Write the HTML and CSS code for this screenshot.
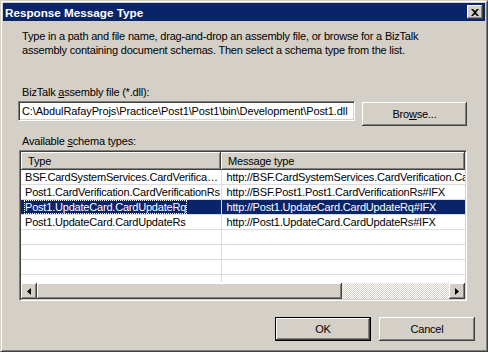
FILE: index.html
```html
<!DOCTYPE html>
<html lang="en">
<head>
    <meta charset="UTF-8">
    <title>Response Message Type</title>
    <link rel="stylesheet" href="styles.css">
</head>
<body>
<div class="window">
    <div class="titlebar">
        <span class="title">Response Message Type</span>
        <span class="close">
            <svg width="8" height="7" viewBox="0 0 8 7"><path d="M0 0h2l2 2 2-2h2L5 3.5 8 7H6L4 5 2 7H0l3-3.5z" fill="#000"/></svg>
        </span>
    </div>
    <div class="content">
        <p class="intro">Type in a path and file name, drag-and-drop an assembly file, or browse for a BizTalk assembly containing document schemas. Then select a schema type from the list.</p>

        <label class="caption first">BizTalk <u>a</u>ssembly file (*.dll):</label>
        <div class="file-row">
            <div class="field"><span>C:\AbdulRafayProjs\Practice\Post1\Post1\bin\Development\Post1.dll</span></div>
            <button class="btn browse">Bro<u>w</u>se...</button>
        </div>

        <label class="caption">Available <u>s</u>chema types:</label>
        <div class="list">
            <div class="list-body">
                <table>
                    <colgroup><col class="col-type"><col></colgroup>
                    <thead>
                        <tr><th>Type</th><th>Message type</th></tr>
                    </thead>
                    <tbody>
                        <tr><td>BSF.CardSystemServices.CardVerification.CardVerificationRs</td><td>http://BSF.CardSystemServices.CardVerification.CardVerificationRs#IFX</td></tr>
                        <tr><td>Post1.CardVerification.CardVerificationRs</td><td>http://BSF.Post1.Post1.CardVerificationRs#IFX</td></tr>
                        <tr class="selected"><td><span class="focus">Post1.UpdateCard.CardUpdateRq</span></td><td>http://Post1.UpdateCard.CardUpdateRq#IFX</td></tr>
                        <tr><td>Post1.UpdateCard.CardUpdateRs</td><td>http://Post1.UpdateCard.CardUpdateRs#IFX</td></tr>
                        <tr><td></td><td></td></tr>
                        <tr><td></td><td></td></tr>
                        <tr><td></td><td></td></tr>
                        <tr><td></td><td></td></tr>
                    </tbody>
                </table>
            </div>
            <div class="hscroll">
                <span class="arrow"><svg width="4" height="7" viewBox="0 0 4 7"><path d="M4 0v7L0 3.5z" fill="#000"/></svg></span>
                <span class="thumb"></span>
                <span class="track"></span>
                <span class="arrow"><svg width="4" height="7" viewBox="0 0 4 7"><path d="M0 0v7l4-3.5z" fill="#000"/></svg></span>
            </div>
        </div>

        <div class="actions">
            <button class="btn default">OK</button>
            <button class="btn">Cancel</button>
        </div>
    </div>
</div>
</body>
</html>
```

FILE: styles.css
```css
body {
    margin: 0;
    padding: 0;
    font-family: "Liberation Sans", Arial, sans-serif;
    font-size: 11px;
    letter-spacing: -0.2px;
    color: #000;
    background: #D4D0C8;
}

.window {
    width: 488px;
    height: 352px;
    box-sizing: border-box;
    padding: 2px;
    background: #D4D0C8;
    border: 1px solid;
    border-color: #D4D0C8 #404040 #404040 #D4D0C8;
    box-shadow: inset 1px 1px #fff, inset -1px -1px #808080;
}

.titlebar {
    height: 18px;
    background: #0A246A;
    color: #fff;
    display: flex;
    align-items: center;
    justify-content: space-between;
    padding: 0 2px 0 2px;
}

.title {
    font-weight: bold;
    font-size: 11.7px;
    letter-spacing: 0;
}

.close {
    width: 16px;
    height: 14px;
    box-sizing: border-box;
    background: #D4D0C8;
    display: flex;
    align-items: center;
    justify-content: center;
    box-shadow: inset -1px -1px #404040, inset 1px 1px #fff, inset -2px -2px #808080;
}

.content {
    padding: 8px 10px 0 15px;
}

.intro {
    margin: 0 0 0 4px;
    line-height: 14px;
    width: 430px;
}

.caption {
    display: block;
    margin: 8px 0 2px 4px;
    line-height: 14px;
}

.caption.first {
    margin-top: 28px;
}

.file-row {
    display: flex;
    align-items: flex-start;
    gap: 7px;
}

.field {
    width: 337px;
    height: 20px;
    box-sizing: border-box;
    background: #fff;
    border: 1px solid;
    border-color: #808080 #fff #fff #808080;
    box-shadow: inset 1px 1px #404040, inset -1px -1px #D4D0C8;
    display: flex;
    align-items: center;
    overflow: hidden;
    padding: 0 3px 0 3px;
    white-space: nowrap;
    letter-spacing: -0.1px;
}

.field span {
    flex-shrink: 0;
}

.btn {
    font-family: "Liberation Sans", Arial, sans-serif;
    font-size: 11px;
    letter-spacing: -0.2px;
    color: #000;
    background: #D4D0C8;
    border: none;
    padding: 0;
    box-shadow: inset -1px -1px #404040, inset 1px 1px #fff, inset -2px -2px #808080, inset 2px 2px #D4D0C8;
    width: 96px;
    height: 24px;
}

.btn.browse {
    width: 105px;
    margin-top: 1px;
}

.btn.default {
    border: 1px solid #000;
}

.list {
    margin-left: 1px;
    width: 448px;
    height: 151px;
    box-sizing: border-box;
    background: #fff;
    border: 1px solid;
    border-color: #808080 #fff #fff #808080;
    box-shadow: inset 1px 1px #404040, inset -1px -1px #D4D0C8;
    padding: 1px;
    display: flex;
    flex-direction: column;
}

.list-body {
    flex: 1;
    overflow: hidden;
}

table {
    width: 100%;
    table-layout: fixed;
    border-collapse: collapse;
}

.col-type {
    width: 200px;
}

th {
    height: 18px;
    padding: 0 7px;
    box-sizing: border-box;
    font-weight: normal;
    text-align: left;
    background: #D4D0C8;
    box-shadow: inset -1px -1px #404040, inset 1px 1px #fff, inset -2px -2px #808080;
    white-space: nowrap;
    overflow: hidden;
}

td {
    height: 14px;
    padding: 0 0 0 5px;
    line-height: 13px;
    border-bottom: 1px solid #DCDCDC;
    white-space: nowrap;
    overflow: hidden;
    text-overflow: clip;
}

td:first-child {
    border-right: 1px solid #DCDCDC;
    padding-left: 4px;
    text-overflow: ellipsis;
}

tr.selected td {
    background: #0A246A;
    color: #fff;
}

.focus {
    outline: 1px dotted #fff;
    outline-offset: 0;
}

.hscroll {
    height: 16px;
    display: flex;
    margin-top: 1px;
}

.arrow {
    width: 16px;
    height: 16px;
    box-sizing: border-box;
    background: #D4D0C8;
    box-shadow: inset -1px -1px #404040, inset 1px 1px #fff, inset -2px -2px #808080;
    display: flex;
    align-items: center;
    justify-content: center;
}

.thumb {
    width: 305px;
    background: #D4D0C8;
    box-shadow: inset -1px -1px #404040, inset 1px 1px #fff, inset -2px -2px #808080;
}

.track {
    flex: 1;
    background-image: conic-gradient(#fff 25%, #D4D0C8 0 50%, #fff 0 75%, #D4D0C8 0);
    background-size: 2px 2px;
}

.actions {
    display: flex;
    justify-content: flex-end;
    gap: 8px;
    margin-top: 16px;
}
```
